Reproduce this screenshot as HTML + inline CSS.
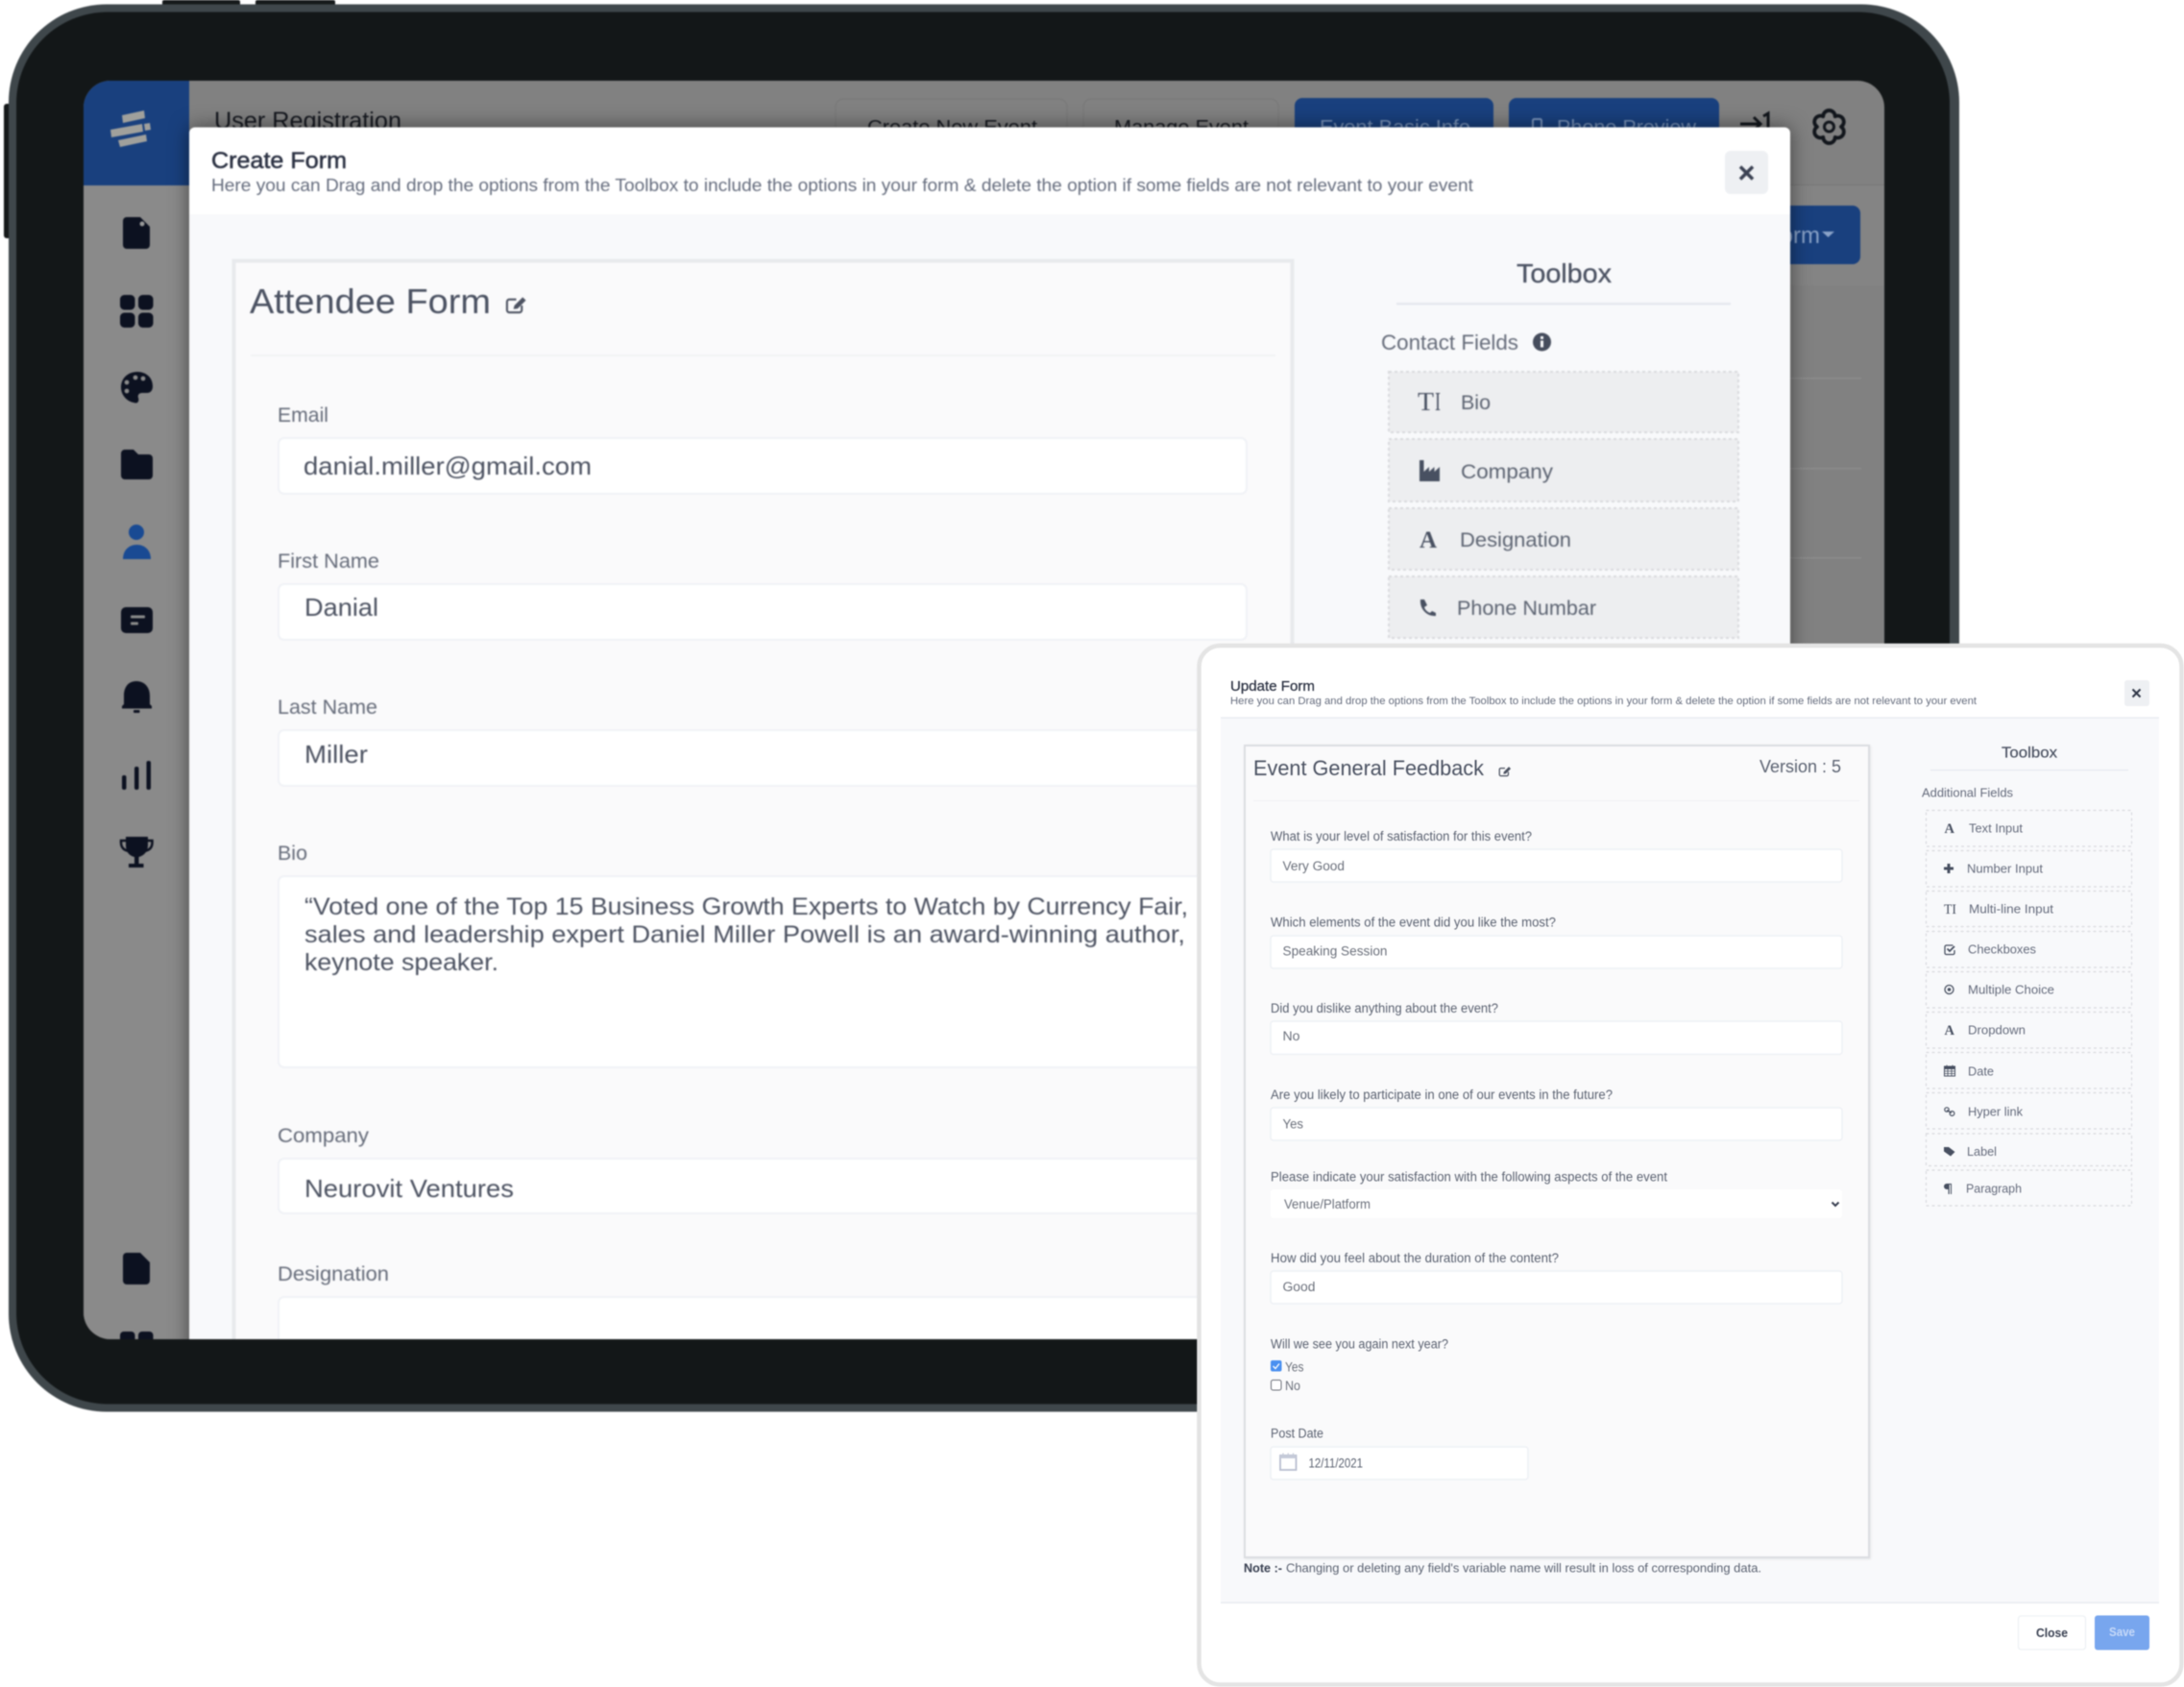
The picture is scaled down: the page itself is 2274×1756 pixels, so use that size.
<!DOCTYPE html>
<html><head><meta charset="utf-8"><title>Forms</title>
<style>
html,body{margin:0;padding:0;background:#fff;width:2274px;height:1756px;overflow:hidden}
svg{display:block}
text{font-family:"Liberation Sans",sans-serif;white-space:pre}
.b1{filter:blur(.8px)}
.b2{filter:blur(.55px)}
.lb{fill:#666c7a;font-size:21px}
.val{fill:#4d5362;font-size:26px}
.bio{fill:#4d5362;font-size:25px}
.ci{fill:#5d6472;font-size:21px}
.q{fill:#5c6372;font-size:13.5px}
.v{fill:#6c717c;font-size:13.5px}
.t{fill:#666c7d;font-size:13px}
.inp{fill:#fff;stroke:#eef1f5;stroke-width:1.5}
.big{fill:#fff;stroke:#f0f2f6;stroke-width:2}
.dash{fill:#f8f9fb;stroke:#d9dbdf;stroke-width:1.2;stroke-dasharray:3 3}
.dash2{fill:#edeef0;stroke:#d9dadd;stroke-width:2;stroke-dasharray:3 3}
.ic{fill:#0c1120}
.si{fill:#485061}
</style></head><body>
<svg width="2274" height="1756" viewBox="0 0 2274 1756" xmlns="http://www.w3.org/2000/svg">
<defs>
<clipPath id="scr"><rect x="87" y="84" width="1875" height="1310" rx="28"/></clipPath>
<symbol id="edit" viewBox="0 0 24 20">
<path d="M18 11v5a2.5 2.5 0 0 1-2.5 2.5h-11A2.5 2.5 0 0 1 2 16V7a2.5 2.5 0 0 1 2.5-2.5H12" fill="none" stroke="#4d5362" stroke-width="2.2"/>
<path d="M9 15l1-4L19 2l3.5 3.5L13.500 14.500z" fill="#4d5362"/>
</symbol>
</defs>

<g class="b1">
<!-- hardware -->
<rect x="169" y="0" width="81" height="8" rx="2" fill="#15191a"/>
<rect x="266" y="0" width="83" height="8" rx="2" fill="#15191a"/>
<rect x="4" y="108" width="10" height="140" rx="3" fill="#15191a"/>
<rect x="9" y="4.500" width="2031" height="1465" rx="102" fill="#3f474b"/>
<rect x="17" y="12.500" width="2013" height="1449" rx="95" fill="#131718"/>

<g clip-path="url(#scr)">
<rect x="87" y="83" width="1875" height="1311" fill="#818181"/>
<rect x="87" y="193" width="110" height="1201" fill="#8a8a8a"/>
<rect x="87" y="83" width="110" height="110" fill="#19407e"/>
<rect x="197" y="192" width="1765" height="1.500" fill="#777"/>
<rect x="197" y="193" width="1765" height="104" fill="#848484"/>
<rect x="1860" y="393" width="78" height="1.500" fill="#8c8c8c"/>
<rect x="1860" y="487" width="78" height="1.500" fill="#8c8c8c"/>
<rect x="1860" y="580" width="78" height="1.500" fill="#8c8c8c"/>

<!-- logo -->
<g fill="#a0a09c">
<polygon points="127,120 150,115 151,123 128,128"/>
<polygon points="115,135 148,129 149,137 116,143"/>
<polygon points="150,129 156,128 157,135 151,136"/>
<polygon points="123,146 152,140 153,147 125,153"/>
</g>

<!-- sidebar icons -->
<path class="ic" d="M132 226h14l10 10v19a4 4 0 0 1-4 4h-20a4 4 0 0 1-4-4v-25a4 4 0 0 1 4-4z"/>
<circle cx="148" cy="233" r="2.500" fill="#999"/>
<rect class="ic" x="125" y="307" width="15.500" height="15.500" rx="4.500"/><rect class="ic" x="144" y="307" width="15.500" height="15.500" rx="4.500"/>
<rect class="ic" x="125" y="325.500" width="15.500" height="15.500" rx="4.500"/><rect class="ic" x="144" y="325.500" width="15.500" height="15.500" rx="4.500"/>
<path class="ic" d="M143 387c-10 0-17 7-17 16 0 9 7 15 13 16 5 2 6-2 5-5-1-3 1-5 4-5h5c4 0 6-3 6-7 0-9-7-15-16-15z"/>
<circle cx="132" cy="398" r="2.400" fill="#8a8a8a"/><circle cx="141" cy="393" r="2.400" fill="#8a8a8a"/><circle cx="149" cy="394" r="2.400" fill="#8a8a8a"/><circle cx="132" cy="407" r="2.400" fill="#8a8a8a"/>
<path class="ic" d="M130 468h9l5 5h11a4 4 0 0 1 4 4v18a4 4 0 0 1-4 4h-25a4 4 0 0 1-4-4v-23a4 4 0 0 1 4-4z"/>
<circle cx="142" cy="554" r="8" fill="#194a93"/><path d="M128 582c0-9 6-15 14.500-15S157 573 157 582z" fill="#194a93"/>
<rect class="ic" x="126" y="632" width="33" height="27" rx="5"/>
<rect x="136" y="640.500" width="15" height="3" rx="1" fill="#8a8a8a"/><rect x="136" y="647.500" width="8" height="3" rx="1" fill="#8a8a8a"/>
<path class="ic" d="M142 709c-9 0-13 7-13 15v9l-2 2v2.500h31V735l-2-2v-9c0-8-5-15-14-15z"/><rect class="ic" x="139" y="739" width="6.500" height="3" rx="1"/>
<rect class="ic" x="127" y="807" width="4.500" height="15" rx="2"/><rect class="ic" x="140" y="798" width="4.500" height="24" rx="2"/><rect class="ic" x="152.500" y="792" width="4.500" height="30" rx="2"/>
<path class="ic" d="M131 871h23v9c0 7-5 11-9.500 12v7h5v4h-15.500v-4h6v-7c-5-1-9-5-9-12z"/>
<path d="M131 875h-5v2c0 5 3 8 8 9M154 875h4.500v2c0 5-3 8-8 9" fill="none" stroke="#0c1120" stroke-width="2.500"/>
<path class="ic" d="M132 1304h14l10 10v19a4 4 0 0 1-4 4h-20a4 4 0 0 1-4-4v-25a4 4 0 0 1 4-4z"/>
<rect class="ic" x="125" y="1386" width="15.500" height="15.500" rx="4"/><rect class="ic" x="144" y="1386" width="15.500" height="15.500" rx="4"/>

<!-- top bar behind modal -->
<text x="223" y="134" font-size="25" fill="#15181f" textLength="195" lengthAdjust="spacingAndGlyphs">User Registration</text>
<rect x="870" y="103" width="241" height="70" rx="8" fill="none" stroke="#7a7a7a" stroke-width="1.500"/>
<text x="903" y="139" font-size="20" fill="#15181f" textLength="177" lengthAdjust="spacingAndGlyphs">Create New Event</text>
<rect x="1128" y="103" width="203" height="70" rx="8" fill="none" stroke="#7a7a7a" stroke-width="1.500"/>
<text x="1160" y="139" font-size="20" fill="#15181f" textLength="140" lengthAdjust="spacingAndGlyphs">Manage Event</text>
<rect x="1348" y="102" width="207" height="70" rx="8" fill="#19407e"/>
<text x="1374" y="139" font-size="20" fill="#7a94bb" textLength="157" lengthAdjust="spacingAndGlyphs">Event Basic Info</text>
<rect x="1571" y="102" width="219" height="70" rx="8" fill="#19407e"/>
<rect x="1596" y="124" width="9" height="14" rx="1.500" fill="none" stroke="#7a94bb" stroke-width="2"/>
<text x="1621" y="139" font-size="20" fill="#7a94bb" textLength="145" lengthAdjust="spacingAndGlyphs">Phone Preview</text>
<path d="M1812 129h20M1826 122l7 7-7 7M1836 121l5-3v20" fill="none" stroke="#12161c" stroke-width="3"/>
<path d="M1910.750 121.200A6.250 6.250 0 0 1 1917 132A6.250 6.250 0 0 1 1910.750 142.800A6.250 6.250 0 0 1 1898.250 142.800A6.250 6.250 0 0 1 1892 132A6.250 6.250 0 0 1 1898.250 121.200A6.250 6.250 0 0 1 1910.750 121.200z" fill="none" stroke="#12161c" stroke-width="3.800" stroke-linejoin="round"/>
<circle cx="1904.500" cy="132" r="5" fill="none" stroke="#12161c" stroke-width="3"/>
<rect x="1800" y="214" width="137" height="61" rx="8" fill="#19407e"/>
<text x="1895" y="253" font-size="24" fill="#8aa3c8" text-anchor="end">Form</text>
<polygon points="1897,241 1910,241 1903.500,247" fill="#8aa3c8"/>

<!-- modal -->
<rect x="197" y="132.500" width="1667" height="1300" rx="6" fill="#fff" style="filter:drop-shadow(0 0 10px rgba(0,0,0,.5))"/>
<rect x="197" y="223" width="1667" height="1210" fill="#f8f9fb"/>
<text x="220" y="175" font-size="24" fill="#2c3243" stroke="#2c3243" stroke-width=".5" textLength="141" lengthAdjust="spacingAndGlyphs">Create Form</text>
<text x="220" y="199" font-size="18" fill="#666d7e" textLength="1314" lengthAdjust="spacingAndGlyphs">Here you can Drag and drop the options from the Toolbox to include the options in your form &amp; delete the option if some fields are not relevant to your event</text>
<rect x="1796" y="157" width="45" height="45" rx="6" fill="#eef0f3"/>
<path d="M1812 173.500l13 13M1825 173.500l-13 13" stroke="#3a4152" stroke-width="3.500"/>

<!-- form card -->
<rect x="243.500" y="271.500" width="1102" height="1200" fill="#fafafb" stroke="#e8eaed" stroke-width="4"/>
<text x="260" y="326" font-size="36" fill="#4b5262" textLength="251" lengthAdjust="spacingAndGlyphs">Attendee Form</text>
<use href="#edit" x="526" y="307" width="23" height="20"/>
<rect x="261" y="369" width="1067" height="2" fill="#f2f3f5"/>

<text class="lb" x="289" y="439" textLength="53" lengthAdjust="spacingAndGlyphs">Email</text>
<rect class="big" x="290" y="456" width="1008" height="58" rx="6"/>
<text class="val" x="316" y="494" textLength="300" lengthAdjust="spacingAndGlyphs">danial.miller@gmail.com</text>

<text class="lb" x="289" y="591" textLength="106" lengthAdjust="spacingAndGlyphs">First Name</text>
<rect class="big" x="290" y="608" width="1008" height="58" rx="6"/>
<text class="val" x="317" y="641" textLength="77" lengthAdjust="spacingAndGlyphs">Danial</text>

<text class="lb" x="289" y="743" textLength="104" lengthAdjust="spacingAndGlyphs">Last Name</text>
<rect class="big" x="290" y="760" width="1008" height="58" rx="6"/>
<text class="val" x="317" y="794" textLength="66" lengthAdjust="spacingAndGlyphs">Miller</text>

<text class="lb" x="289" y="895" textLength="31" lengthAdjust="spacingAndGlyphs">Bio</text>
<rect class="big" x="290" y="912" width="1008" height="199" rx="6"/>
<text class="bio" x="317" y="952" textLength="920" lengthAdjust="spacingAndGlyphs">“Voted one of the Top 15 Business Growth Experts to Watch by Currency Fair,</text>
<text class="bio" x="317" y="981" textLength="917" lengthAdjust="spacingAndGlyphs">sales and leadership expert Daniel Miller Powell is an award-winning author,</text>
<text class="bio" x="317" y="1010" textLength="202" lengthAdjust="spacingAndGlyphs">keynote speaker.</text>

<text class="lb" x="289" y="1189" textLength="95" lengthAdjust="spacingAndGlyphs">Company</text>
<rect class="big" x="290" y="1206" width="1008" height="57" rx="6"/>
<text class="val" x="317" y="1246" textLength="218" lengthAdjust="spacingAndGlyphs">Neurovit Ventures</text>

<text class="lb" x="289" y="1333" textLength="116" lengthAdjust="spacingAndGlyphs">Designation</text>
<rect class="big" x="290" y="1350" width="1008" height="80" rx="6"/>

<!-- toolbox -->
<text x="1579" y="294" font-size="28" fill="#4b5262" stroke="#4b5262" stroke-width=".3" textLength="99" lengthAdjust="spacingAndGlyphs">Toolbox</text>
<rect x="1454" y="315" width="348" height="2.500" fill="#e6e9ef"/>
<text x="1438" y="364" font-size="22" fill="#666c7a" textLength="143" lengthAdjust="spacingAndGlyphs">Contact Fields</text>
<circle cx="1605.500" cy="356" r="9.500" fill="#454c5c"/><rect x="1604" y="350" width="3" height="3" fill="#f8f9fb"/><rect x="1604" y="354.500" width="3" height="7" fill="#f8f9fb"/>

<rect class="dash2" x="1446" y="387" width="364" height="63"/>
<rect class="dash2" x="1446" y="457" width="364" height="65"/>
<rect class="dash2" x="1446" y="529" width="364" height="64"/>
<rect class="dash2" x="1446" y="600" width="364" height="64"/>
<text x="1476" y="427" font-size="27" fill="#485061" style="font-family:'Liberation Serif',serif" textLength="17" lengthAdjust="spacingAndGlyphs">T</text>
<text x="1494" y="427" font-size="27" fill="#485061" style="font-family:'Liberation Serif',serif" textLength="6" lengthAdjust="spacingAndGlyphs">I</text>
<text class="ci" x="1521" y="426" textLength="31" lengthAdjust="spacingAndGlyphs">Bio</text>
<path class="si" d="M1478 479h4.500v12l5.500-5v5l5.500-5v5l5.500-5v15h-21z"/>
<text class="ci" x="1521" y="498" textLength="96" lengthAdjust="spacingAndGlyphs">Company</text>
<text x="1478" y="570" font-size="25" font-weight="bold" fill="#485061" style="font-family:'Liberation Serif',serif">A</text>
<text class="ci" x="1520" y="569" textLength="116" lengthAdjust="spacingAndGlyphs">Designation</text>
<path class="si" d="M1479 624l4 0 3 6-3 2c1 3 3 5 6 6l2-2 4 2 0 3c-9 1-17-7-16-17z"/>
<text class="ci" x="1517" y="640" textLength="145" lengthAdjust="spacingAndGlyphs">Phone Numbar</text>
</g>
</g>

<!-- update panel -->
<g class="b2">
<rect x="1248.500" y="672" width="1023" height="1081.500" rx="22" fill="#fff" stroke="#e4e4e4" stroke-width="4.500"/>
<rect x="1271" y="747" width="977" height="921" fill="#f8f9fb"/>
<rect x="1271" y="746.500" width="977" height="1.200" fill="#e6e9ef"/>
<rect x="1271" y="1667.500" width="977" height="1.500" fill="#e8ebf0"/>
<text x="1281" y="719" font-size="14.500" fill="#2c3243" stroke="#2c3243" stroke-width=".25" textLength="88" lengthAdjust="spacingAndGlyphs">Update Form</text>
<text x="1281" y="733" font-size="11" fill="#666d7e" textLength="777" lengthAdjust="spacingAndGlyphs">Here you can Drag and drop the options from the Toolbox to include the options in your form &amp; delete the option if some fields are not relevant to your event</text>
<rect x="2212" y="708" width="26" height="27" rx="3" fill="#eef0f3"/>
<path d="M2220.500 717.500l8 8M2228.500 717.500l-8 8" stroke="#2f3647" stroke-width="2"/>

<rect x="1296" y="776" width="650" height="845" fill="#fafafb" stroke="#dcdee2" stroke-width="2" style="filter:drop-shadow(1px 1px 1px rgba(0,0,0,.08))"/>
<text x="1305" y="807" font-size="22" fill="#4b5262" textLength="240" lengthAdjust="spacingAndGlyphs">Event General Feedback</text>
<use href="#edit" x="1560" y="797" width="14" height="11.500"/>
<text x="1832" y="804" font-size="18" fill="#5c6372" textLength="85" lengthAdjust="spacingAndGlyphs">Version : 5</text>
<rect x="1305" y="833" width="631" height="1" fill="#f0f1f4"/>

<text class="q" x="1323" y="875" textLength="272" lengthAdjust="spacingAndGlyphs">What is your level of satisfaction for this event?</text>
<rect class="inp" x="1323" y="884" width="595" height="34" rx="3"/>
<text class="v" x="1335.500" y="906" textLength="64.500" lengthAdjust="spacingAndGlyphs">Very Good</text>

<text class="q" x="1323" y="964.500" textLength="297" lengthAdjust="spacingAndGlyphs">Which elements of the event did you like the most?</text>
<rect class="inp" x="1323" y="974" width="595" height="34" rx="3"/>
<text class="v" x="1335.500" y="994.500" textLength="109" lengthAdjust="spacingAndGlyphs">Speaking Session</text>

<text class="q" x="1323" y="1054" textLength="237" lengthAdjust="spacingAndGlyphs">Did you dislike anything about the event?</text>
<rect class="inp" x="1323" y="1063" width="595" height="34.500" rx="3"/>
<text class="v" x="1335.500" y="1083" textLength="18" lengthAdjust="spacingAndGlyphs">No</text>

<text class="q" x="1323" y="1144" textLength="356" lengthAdjust="spacingAndGlyphs">Are you likely to participate in one of our events in the future?</text>
<rect class="inp" x="1323" y="1153" width="595" height="34" rx="3"/>
<text class="v" x="1335.500" y="1174.500" textLength="21.500" lengthAdjust="spacingAndGlyphs">Yes</text>

<text class="q" x="1323" y="1229.500" textLength="413" lengthAdjust="spacingAndGlyphs">Please indicate your satisfaction with the following aspects of the event</text>
<rect x="1323" y="1238" width="595" height="30" rx="3" fill="#fff"/>
<text class="v" x="1337" y="1258" textLength="90" lengthAdjust="spacingAndGlyphs">Venue/Platform</text>
<path d="M1907.500 1251.500l3.500 3.500 3.500-3.500" fill="none" stroke="#3a4152" stroke-width="2"/>

<text class="q" x="1323" y="1314" textLength="300" lengthAdjust="spacingAndGlyphs">How did you feel about the duration of the content?</text>
<rect class="inp" x="1323" y="1323" width="595" height="34" rx="3"/>
<text class="v" x="1335.500" y="1344" textLength="34" lengthAdjust="spacingAndGlyphs">Good</text>

<text class="q" x="1323" y="1403.500" textLength="185" lengthAdjust="spacingAndGlyphs">Will we see you again next year?</text>
<rect x="1323" y="1416" width="11.500" height="11.500" rx="2" fill="#4a90f0"/>
<path d="M1325.500 1422l2.500 2.500 4-5" fill="none" stroke="#fff" stroke-width="1.300"/>
<text class="v" x="1338" y="1427.500" textLength="19.500" lengthAdjust="spacingAndGlyphs">Yes</text>
<rect x="1323.500" y="1436.500" width="10.500" height="10.500" rx="2" fill="#fff" stroke="#6b6f78" stroke-width="1"/>
<text class="v" x="1338" y="1447" textLength="16" lengthAdjust="spacingAndGlyphs">No</text>

<text class="q" x="1323" y="1496.500" textLength="55" lengthAdjust="spacingAndGlyphs">Post Date</text>
<rect class="inp" x="1323" y="1506" width="268" height="34" rx="3"/>
<rect x="1333" y="1515" width="16.500" height="15" fill="#fff" stroke="#b9bfd0" stroke-width="1.800"/>
<rect x="1333" y="1515" width="16.500" height="3" fill="#c6cbd9"/>
<path d="M1336 1512.500v3M1341.250 1512.500v3M1346.500 1512.500v3" stroke="#c6cbd9" stroke-width="1.200"/>
<text x="1362.500" y="1527.500" font-size="13.500" fill="#5c6372" textLength="56.500" lengthAdjust="spacingAndGlyphs">12/11/2021</text>

<text x="1295" y="1636.500" font-size="13" font-weight="bold" fill="#3a4152" textLength="40" lengthAdjust="spacingAndGlyphs">Note :-</text>
<text x="1339" y="1636.500" font-size="13" fill="#5c6372" textLength="495" lengthAdjust="spacingAndGlyphs">Changing or deleting any field's variable name will result in loss of corresponding data.</text>

<!-- small toolbox -->
<text x="2084" y="788.500" font-size="16" fill="#4b5262" stroke="#4b5262" stroke-width=".2" textLength="58" lengthAdjust="spacingAndGlyphs">Toolbox</text>
<rect x="2010" y="801" width="206" height="1.200" fill="#e6e9ef"/>
<text x="2001" y="829.500" font-size="13" fill="#666c7d" textLength="95" lengthAdjust="spacingAndGlyphs">Additional Fields</text>

<rect class="dash" x="2005.500" y="843.500" width="214" height="37.500"/>
<rect class="dash" x="2005.500" y="885.500" width="214" height="37.500"/>
<rect class="dash" x="2005.500" y="927.500" width="214" height="37"/>
<rect class="dash" x="2005.500" y="969.500" width="214" height="37.500"/>
<rect class="dash" x="2005.500" y="1011.500" width="214" height="37.500"/>
<rect class="dash" x="2005.500" y="1053.500" width="214" height="37.500"/>
<rect class="dash" x="2005.500" y="1095.500" width="214" height="37.500"/>
<rect class="dash" x="2005.500" y="1137.500" width="214" height="37.500"/>
<rect class="dash" x="2005.500" y="1180" width="214" height="33.500"/>
<rect class="dash" x="2005.500" y="1218" width="214" height="37"/>

<text x="2024.500" y="867" font-size="14.500" font-weight="bold" fill="#485061" style="font-family:'Liberation Serif',serif">A</text>
<text class="t" x="2050" y="866.500" textLength="56" lengthAdjust="spacingAndGlyphs">Text Input</text>
<path d="M2024 904h10M2029 899v10" stroke="#485061" stroke-width="3"/>
<text class="t" x="2048" y="908.500" textLength="79" lengthAdjust="spacingAndGlyphs">Number Input</text>
<text x="2024" y="951" font-size="14.500" fill="#485061" style="font-family:'Liberation Serif',serif" textLength="13" lengthAdjust="spacingAndGlyphs">TI</text>
<text class="t" x="2050" y="950.500" textLength="88" lengthAdjust="spacingAndGlyphs">Multi-line Input</text>
<path d="M2035 989v3a1.500 1.500 0 0 1-1.500 1.500h-7a1.500 1.500 0 0 1-1.500-1.500v-6.500a1.500 1.500 0 0 1 1.500-1.500h7" fill="none" stroke="#485061" stroke-width="1.300"/><path d="M2027.500 987.500l2.500 2.500 5-5" fill="none" stroke="#485061" stroke-width="1.800"/>
<text class="t" x="2049" y="992.500" textLength="71" lengthAdjust="spacingAndGlyphs">Checkboxes</text>
<circle cx="2029.500" cy="1030" r="4.500" fill="none" stroke="#485061" stroke-width="1.300"/><circle cx="2029.500" cy="1030" r="1.800" fill="#485061"/>
<text class="t" x="2049" y="1034.500" textLength="90" lengthAdjust="spacingAndGlyphs">Multiple Choice</text>
<text x="2024.500" y="1077" font-size="14.500" font-weight="bold" fill="#485061" style="font-family:'Liberation Serif',serif">A</text>
<text class="t" x="2049" y="1076.500" textLength="60" lengthAdjust="spacingAndGlyphs">Dropdown</text>
<rect x="2024.500" y="1110" width="11" height="10" fill="none" stroke="#485061" stroke-width="1"/><rect x="2024.500" y="1110" width="11" height="3" fill="#485061"/>
<path d="M2027 1108.500v2M2033 1108.500v2M2024.500 1115h11M2024.500 1117.500h11M2028 1113v7M2032 1113v7" stroke="#485061" stroke-width=".8"/>
<text class="t" x="2049" y="1119.500" textLength="27" lengthAdjust="spacingAndGlyphs">Date</text>
<path d="M2027 1155.500l5 3" stroke="#485061" stroke-width="1.300"/><circle cx="2027" cy="1155" r="2.200" fill="none" stroke="#485061" stroke-width="1.200"/><circle cx="2032.500" cy="1159" r="2.400" fill="none" stroke="#485061" stroke-width="1.200"/>
<text class="t" x="2049" y="1161.500" textLength="57" lengthAdjust="spacingAndGlyphs">Hyper link</text>
<path class="si" d="M2024 1194h5l6.500 5-4.500 4.500-7-5z"/>
<text class="t" x="2048" y="1203" textLength="31" lengthAdjust="spacingAndGlyphs">Label</text>
<path class="si" d="M2032 1232h-5a3 3 0 0 0 0 6h1.500v5h1.200v-10h1.300v10h1z"/>
<text class="t" x="2047" y="1241.500" textLength="58" lengthAdjust="spacingAndGlyphs">Paragraph</text>

<rect x="2101.500" y="1682" width="70" height="35" rx="3" fill="#fff" stroke="#eef1f5" stroke-width="1.300"/>
<text x="2120" y="1704" font-size="13" font-weight="bold" fill="#3a4152" textLength="33" lengthAdjust="spacingAndGlyphs">Close</text>
<rect x="2181" y="1681.500" width="57" height="36" rx="3" fill="#78a6ee"/>
<text x="2196" y="1703" font-size="13" font-weight="bold" fill="#c6d9f8" textLength="27" lengthAdjust="spacingAndGlyphs">Save</text>
</g>
</svg>
</body></html>
